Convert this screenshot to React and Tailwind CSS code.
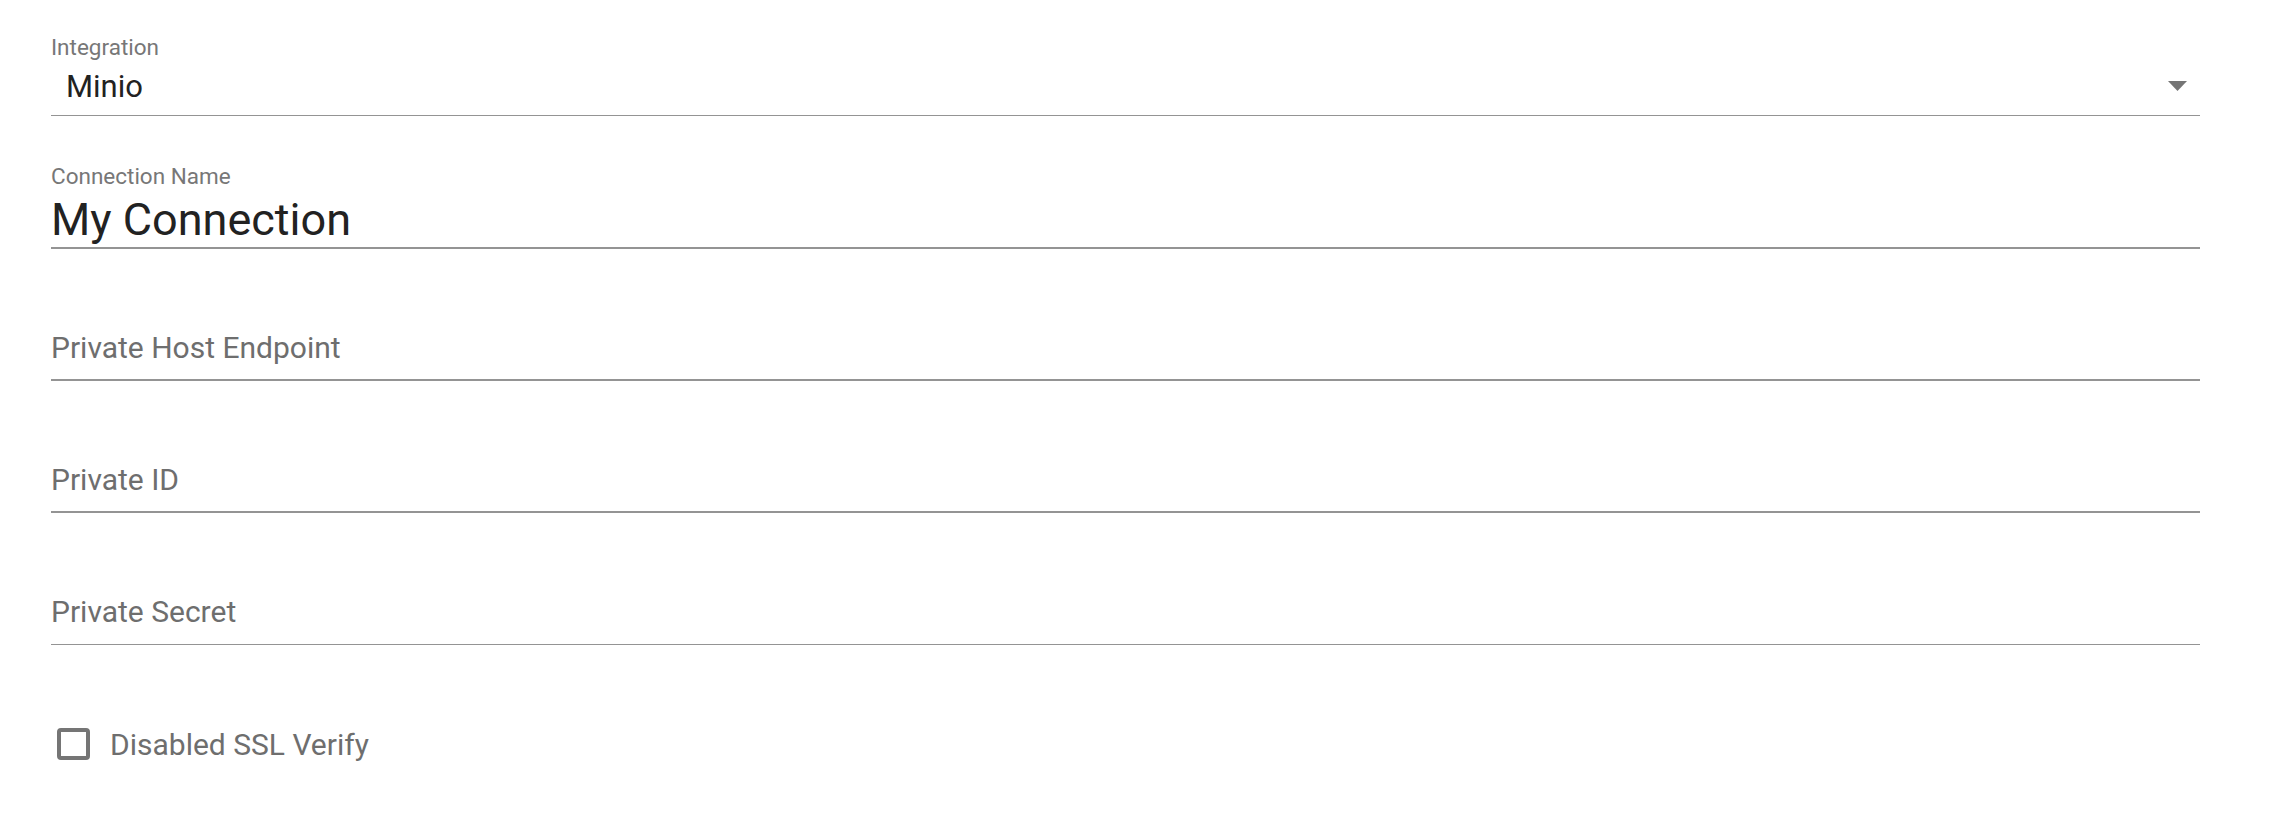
// Connection form - Minio integration
import { useState } from 'react';

function TextField({ placeholder, value, onChange, thick }) {
  return (
    <div
      className={`h-[132px] flex flex-col justify-end ${
        thick ? 'border-b-2 pb-[14px]' : 'border-b pb-[15px]'
      } border-[#949494]`}
    >
      <input
        type="text"
        value={value}
        onChange={(e) => onChange(e.target.value)}
        placeholder={placeholder}
        className="w-full text-[30px] leading-[34px] text-[#212121] placeholder-[#6e6e6e] bg-transparent outline-none p-0"
      />
    </div>
  );
}

export default function App() {
  const [integration] = useState('Minio');
  const [name, setName] = useState('My Connection');
  const [host, setHost] = useState('');
  const [id, setId] = useState('');
  const [secret, setSecret] = useState('');
  const [sslDisabled, setSslDisabled] = useState(false);

  return (
    <div className="min-h-[813px] bg-white pl-[51px] pr-[73px] font-[Roboto,sans-serif]">
      {/* Integration select */}
      <div className="pt-[35px] pb-[8px] border-b border-[#949494]">
        <div className="text-[22.5px] leading-[24px] text-[#777777]">Integration</div>
        <div className="mt-[8px] h-[40px] flex items-center justify-between pl-[15px] pr-[13px] cursor-pointer">
          <span className="text-[31px] leading-[40px] text-[#222222]">{integration}</span>
          <svg width="19" height="10" viewBox="0 0 19 10" className="-mt-[2px]">
            <path d="M0 0 L19 0 L9.5 10 Z" fill="#757575" />
          </svg>
        </div>
      </div>

      {/* Connection name */}
      <div className="h-[133px] flex flex-col justify-end pb-[1px] border-b-2 border-[#949494]">
        <div className="text-[22.5px] leading-[24px] text-[#777777]">Connection Name</div>
        <input
          type="text"
          value={name}
          onChange={(e) => setName(e.target.value)}
          className="mt-[6px] w-full text-[45px] leading-[52px] text-[#222222] bg-transparent outline-none p-0"
        />
      </div>

      <TextField placeholder="Private Host Endpoint" value={host} onChange={setHost} thick />
      <TextField placeholder="Private ID" value={id} onChange={setId} thick />
      <TextField placeholder="Private Secret" value={secret} onChange={setSecret} />

      {/* SSL checkbox */}
      <label className="pt-[83px] flex items-start cursor-pointer">
        <span
          onClick={() => setSslDisabled(!sslDisabled)}
          className="ml-[6px] w-[33px] h-[32px] border-[4px] border-[#757575] rounded-[4px]"
        ></span>
        <span className="ml-[20px] text-[30px] leading-[34px] text-[#6e6e6e]">Disabled SSL Verify</span>
      </label>
    </div>
  );
}
